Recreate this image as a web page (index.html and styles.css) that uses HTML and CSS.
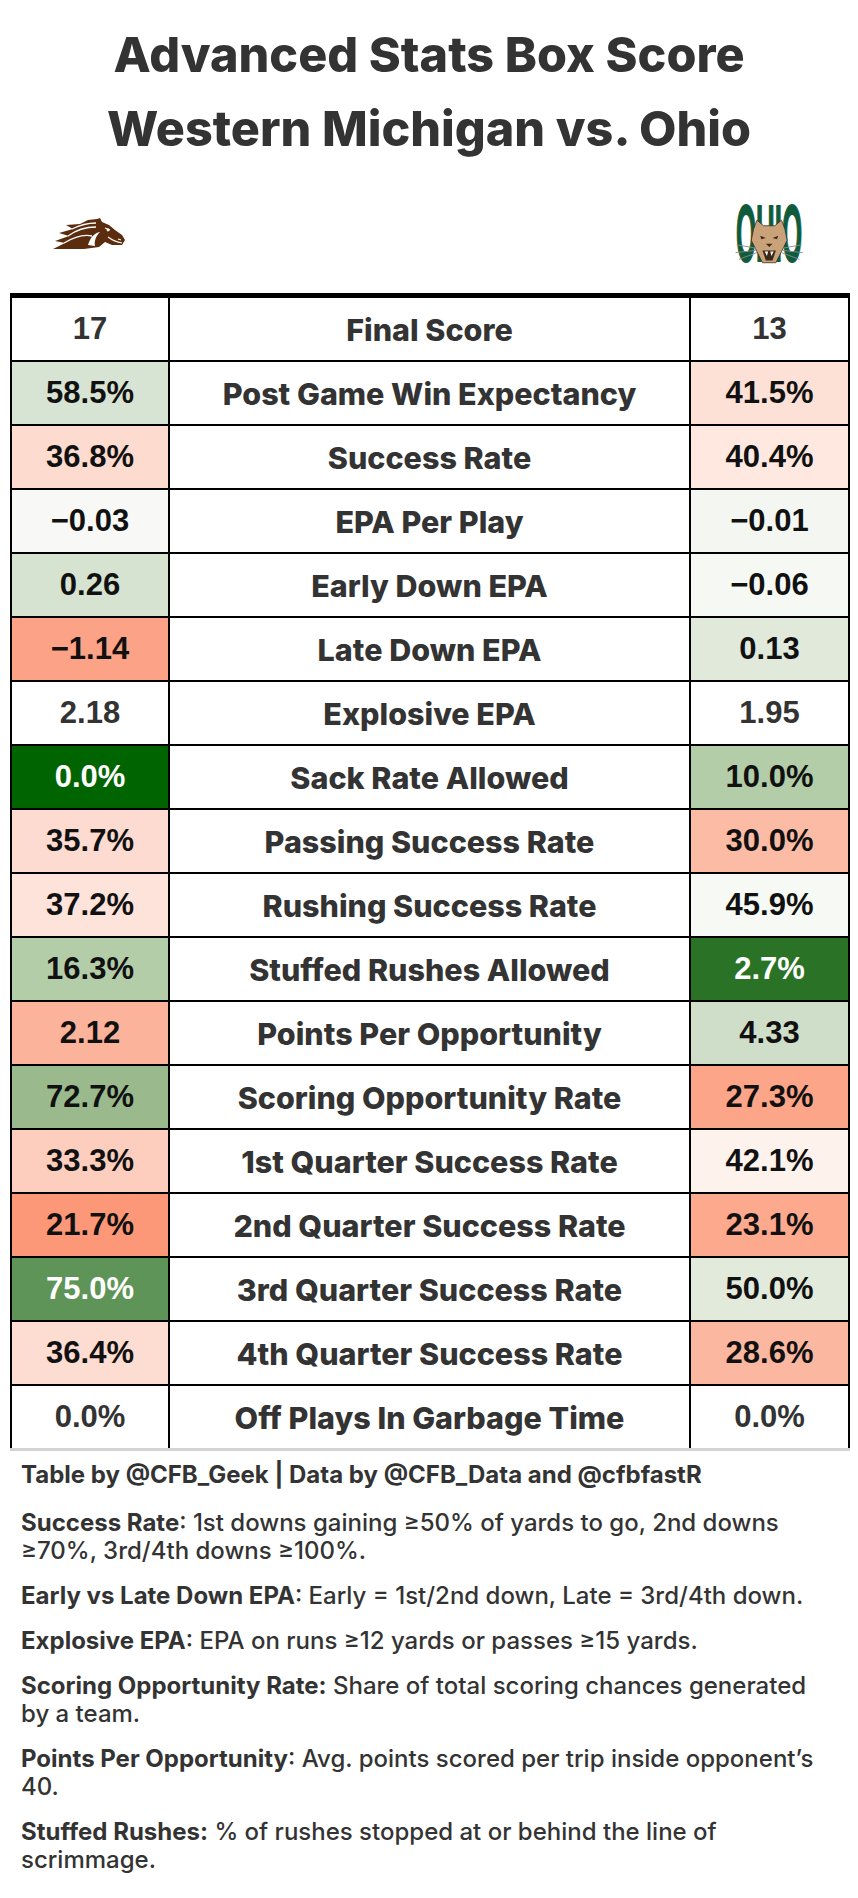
FILE: index.html
```html
<!DOCTYPE html>
<html lang="en">
<head>
<meta charset="utf-8">
<title>Advanced Stats Box Score</title>
<link rel="stylesheet" href="styles.css">
</head>
<body>
<div class="page">
  <h1 class="title">Advanced Stats Box Score<br>Western Michigan vs. Ohio</h1>

  <div class="logos">
    <div class="logo-cell">
      <svg class="bronco" width="74" height="32" viewBox="0 0 74 32" aria-label="Western Michigan logo">
        <path fill="#5b2c0e" d="M1,31 L13,25 L3,23 L17,18 L7,15 L21,11 L14,7 L28,6 L36,2 L45,1 L48,0 L50,4 L57,7 L63,12 L70,17 L73,22 L70,27 L60,27 L53,24 L47,29 L32,31 Z"/>
        <path fill="none" stroke="#fff" stroke-width="1.3" d="M16,18 C24,12 34,9 44,9 M20,11 C28,7 36,5 44,5 M12,25 C22,19 32,16 40,18"/>
        <path fill="#fff" d="M36,27 C38,20 42,15 48,14 C44,18 42,23 43,28 Z"/>
        <path fill="none" stroke="#fff" stroke-width="1.2" d="M53,10 L58,12 M66,21 L69,22 M56,19 C60,22 64,24 70,25"/>
        <circle cx="56" cy="12" r="1.4" fill="#fff"/>
      </svg>
    </div>
    <div></div>
    <div class="logo-cell">
      <svg class="ohio" width="70" height="90" viewBox="0 -12 70 90" aria-label="Ohio logo">
        <text class="ohio-word" x="35" y="61" text-anchor="middle" textLength="66" lengthAdjust="spacingAndGlyphs">OHIO</text>
        <g transform="translate(-4,0) scale(1.12)">
          <path fill="#c9a27a" stroke="#3b2a1a" stroke-width="0.7" d="M21,26 L24,18 L30,23 L40,23 L46,18 L49,26 L51,36 L46,46 L41,56 L29,56 L24,46 L19,36 Z"/>
          <path fill="#3b2a1a" d="M27,32 L32,34 L28,35 Z M43,32 L38,34 L42,35 Z M32,39 L38,39 L35,42 Z M29,45 L41,45 L38,54 L32,54 Z"/>
          <path fill="#fff" d="M31,46 L33,50 L34,46 Z M39,46 L37,50 L36,46 Z"/>
          <path fill="none" stroke="#8a8a8a" stroke-width="0.8" d="M23,43 L6,40 M23,45 L5,47 M24,47 L8,53 M47,43 L64,40 M47,45 L65,47 M46,47 L62,53"/>
        </g>
      </svg>
    </div>
  </div>

  <table class="box">
    <colgroup><col class="c-side"><col class="c-mid"><col class="c-side2"></colgroup>
    <tbody>
      <tr class="head"><td class="num">17</td><td class="label">Final Score</td><td class="num">13</td></tr>
      <tr><td class="num v" style="background:#d8e4d3">58.5%</td><td class="label">Post Game Win Expectancy</td><td class="num v" style="background:#fde0d6">41.5%</td></tr>
      <tr><td class="num v" style="background:#fddbcf">36.8%</td><td class="label">Success Rate</td><td class="num v" style="background:#fee8e0">40.4%</td></tr>
      <tr><td class="num v" style="background:#f8f9f6">−0.03</td><td class="label">EPA Per Play</td><td class="num v" style="background:#f3f6f1">−0.01</td></tr>
      <tr><td class="num v" style="background:#d6e3d0">0.26</td><td class="label">Early Down EPA</td><td class="num v" style="background:#f6f8f4">−0.06</td></tr>
      <tr><td class="num v" style="background:#fca286">−1.14</td><td class="label">Late Down EPA</td><td class="num v" style="background:#e0e9da">0.13</td></tr>
      <tr><td class="num">2.18</td><td class="label">Explosive EPA</td><td class="num">1.95</td></tr>
      <tr><td class="num v dark" style="background:#006400">0.0%</td><td class="label">Sack Rate Allowed</td><td class="num v" style="background:#b3cda8">10.0%</td></tr>
      <tr><td class="num v" style="background:#fddbd0">35.7%</td><td class="label">Passing Success Rate</td><td class="num v" style="background:#fcbba5">30.0%</td></tr>
      <tr><td class="num v" style="background:#fde3da">37.2%</td><td class="label">Rushing Success Rate</td><td class="num v" style="background:#f7f9f5">45.9%</td></tr>
      <tr><td class="num v" style="background:#b4cda9">16.3%</td><td class="label">Stuffed Rushes Allowed</td><td class="num v dark" style="background:#2a7226">2.7%</td></tr>
      <tr><td class="num v" style="background:#fcb39c">2.12</td><td class="label">Points Per Opportunity</td><td class="num v" style="background:#cfdec8">4.33</td></tr>
      <tr><td class="num v" style="background:#9aba8d">72.7%</td><td class="label">Scoring Opportunity Rate</td><td class="num v" style="background:#fca588">27.3%</td></tr>
      <tr><td class="num v" style="background:#fdcebe">33.3%</td><td class="label">1st Quarter Success Rate</td><td class="num v" style="background:#fef2ed">42.1%</td></tr>
      <tr><td class="num v" style="background:#fc9878">21.7%</td><td class="label">2nd Quarter Success Rate</td><td class="num v" style="background:#fca98e">23.1%</td></tr>
      <tr><td class="num v dark" style="background:#5f9458">75.0%</td><td class="label">3rd Quarter Success Rate</td><td class="num v" style="background:#e1eadb">50.0%</td></tr>
      <tr><td class="num v" style="background:#fddcd1">36.4%</td><td class="label">4th Quarter Success Rate</td><td class="num v" style="background:#fcb7a1">28.6%</td></tr>
      <tr class="last"><td class="num">0.0%</td><td class="label">Off Plays In Garbage Time</td><td class="num">0.0%</td></tr>
    </tbody>
  </table>

  <div class="notes">
    <p class="credit">Table by @CFB_Geek | Data by @CFB_Data and @cfbfastR</p>
    <p><b>Success Rate</b>: 1st downs gaining ≥50% of yards to go, 2nd downs ≥70%, 3rd/4th downs ≥100%.</p>
    <p><b>Early vs Late Down EPA</b>: Early = 1st/2nd down, Late = 3rd/4th down.</p>
    <p><b>Explosive EPA</b>: EPA on runs ≥12 yards or passes ≥15 yards.</p>
    <p><b>Scoring Opportunity Rate:</b> Share of total scoring chances generated by a team.</p>
    <p><b>Points Per Opportunity</b>: Avg. points scored per trip inside opponent’s 40.</p>
    <p><b>Stuffed Rushes:</b> % of rushes stopped at or behind the line of scrimmage.</p>
  </div>
</div>
</body>
</html>
```

FILE: styles.css
```css
html, body {
  margin: 0;
  padding: 0;
  background: #fff;
}

body {
  font-family: Inter, "Liberation Sans", sans-serif;
  color: #333;
}

.page {
  width: 858px;
  padding: 0 10px;
  box-sizing: border-box;
}

.title {
  margin: 0;
  padding-top: 18px;
  text-align: center;
  font-size: 48.5px;
  line-height: 74px;
  font-weight: 800;
  color: #333;
}

.logos {
  display: grid;
  grid-template-columns: 158px 1fr 159px;
  height: 90px;
  margin: 22px 0 15px;
  align-items: center;
  justify-items: center;
}

.logo-cell {
  display: flex;
  align-items: center;
  justify-content: center;
}

.bronco { margin-top: 2px; }

.ohio-word {
  font-family: "Liberation Sans", sans-serif;
  font-weight: 700;
  font-size: 80px;
  fill: #0f5b3c;
  stroke: #0f5b3c;
  stroke-width: 2px;
  stroke-linejoin: round;
}

.box {
  border-collapse: collapse;
  table-layout: fixed;
  width: 838px;
}

.c-side { width: 158px; }
.c-mid { width: 521px; }
.c-side2 { width: 159px; }

.box td {
  border: 2px solid #000;
  height: 62px;
  padding: 0;
  text-align: center;
  vertical-align: middle;
  font-size: 30.5px;
  font-weight: 800;
  color: #333;
}

.box td.num {
  font-family: "Liberation Sans", Inter, sans-serif;
  font-size: 31px;
  font-weight: 700;
}

.box tr.head td {
  border-top: 5px solid #000;
}

.box tr.last td {
  border-bottom: 3px solid #d3d3d3;
}

.box td.v { color: #111; }
.box td.dark { color: #fff; }

.notes {
  padding: 10px 14px 0 11px;
  font-size: 24px;
  line-height: 28px;
  font-weight: 500;
  color: #333;
}

.notes p {
  margin: 0 0 17px;
}

.notes .credit {
  font-weight: 700;
  margin-bottom: 20px;
}

.notes b {
  font-weight: 700;
}
```
